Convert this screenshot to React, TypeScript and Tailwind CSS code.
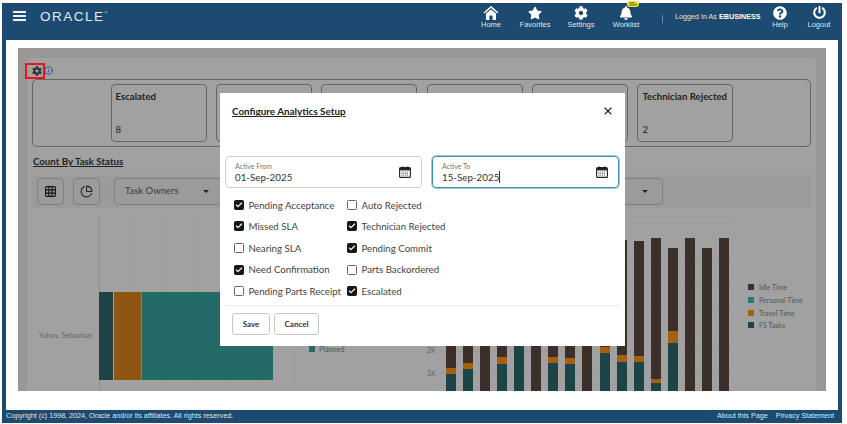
import { FaStar, FaCog, FaBell, FaQuestionCircle, FaPowerOff } from 'react-icons/fa';
import { Check, X, Info, Grid3x3, ChartPie } from 'lucide-react';
import type { ReactNode } from 'react';

const cards = [
  { title: 'Escalated', count: '8' },
  { title: '', count: '' },
  { title: '', count: '' },
  { title: '', count: '' },
  { title: '', count: '' },
  { title: 'Technician Rejected', count: '2' },
];

const checks = [
  { label: 'Pending Acceptance', on: true },
  { label: 'Auto Rejected', on: false },
  { label: 'Missed SLA', on: true },
  { label: 'Technician Rejected', on: true },
  { label: 'Nearing SLA', on: false },
  { label: 'Pending Commit', on: true },
  { label: 'Need Confirmation', on: true },
  { label: 'Parts Backordered', on: false },
  { label: 'Pending Parts Receipt', on: false },
  { label: 'Escalated', on: true },
];

// top of bar, end of dark part, end of orange part; all page y, bottom is 391
const bars = [
  { x: 446, top: 240, dark: 368, orange: 374 },
  { x: 463, top: 240, dark: 363, orange: 369 },
  { x: 480, top: 240, dark: 391, orange: 391 },
  { x: 497, top: 240, dark: 357, orange: 364 },
  { x: 514, top: 340, dark: 340, orange: 340 },
  { x: 531, top: 240, dark: 391, orange: 391 },
  { x: 548, top: 240, dark: 357, orange: 363 },
  { x: 565, top: 240, dark: 358, orange: 364 },
  { x: 582, top: 240, dark: 391, orange: 391 },
  { x: 600, top: 240, dark: 347, orange: 353 },
  { x: 617, top: 240, dark: 355, orange: 362 },
  { x: 634, top: 241, dark: 356, orange: 362 },
  { x: 651, top: 238, dark: 379, orange: 383 },
  { x: 668, top: 248, dark: 331, orange: 343 },
  { x: 685, top: 238, dark: 391, orange: 391 },
  { x: 702, top: 248, dark: 391, orange: 391 },
  { x: 719, top: 238, dark: 391, orange: 391 },
];

const legend = [
  { label: 'Idle Time', color: '#3a2f29', y: 287 },
  { label: 'Personal Time', color: '#2a7a78', y: 300 },
  { label: 'Travel Time', color: '#a5600f', y: 313 },
  { label: 'FS Tasks', color: '#1c4345', y: 325 },
];

function HomeIcon() {
  return (
    <svg width="16" height="14" viewBox="0 0 16 14" fill="none">
      <path d="M1 7 L8 1 L15 7" stroke="#fff" strokeWidth="1.6" />
      <path d="M3 7.6 L8 3.4 L13 7.6 V14 H9.6 V9.6 H6.4 V14 H3 Z" fill="#fff" />
    </svg>
  );
}

function CalendarIcon() {
  return (
    <svg width="12" height="12" viewBox="0 0 12 12" fill="none">
      <rect x="0.6" y="1.6" width="10.8" height="9.8" rx="1" stroke="#222" strokeWidth="1.1" />
      <rect x="1" y="2" width="10" height="2.4" fill="#222" />
      <rect x="2.8" y="0.4" width="1" height="2" fill="#222" />
      <rect x="8.2" y="0.4" width="1" height="2" fill="#222" />
      <path d="M2.5 6h7M2.5 7.6h7M2.5 9.2h7" stroke="#555" strokeWidth="0.9" strokeDasharray="1 0.8" />
    </svg>
  );
}

function NavItem({ icon, label, width }: { icon: ReactNode; label: string; width: string }) {
  return (
    <div className={`flex flex-col items-center ${width}`}>
      <div className="flex h-[15px] items-center justify-center">{icon}</div>
      <span className="whitespace-nowrap text-[7.5px] leading-[10px] text-[#dfe6ec]">{label}</span>
    </div>
  );
}

function DateField({ label, value, active, width }: { label: string; value: string; active?: boolean; width: string }) {
  return (
    <div
      className={`flex h-[32px] items-center justify-between rounded-[4px] border pl-[9px] pr-[10px] ${width} ${
        active ? 'border-[#3f8fb5] shadow-[0_0_0_0.5px_#3f8fb5]' : 'border-[#d0d0d0]'
      }`}
    >
      <div className="flex flex-col">
        <span className="text-[7px] leading-[9px] text-[#777]">{label}</span>
        <span className="text-[9.8px] leading-[12px] text-[#333]">
          {value}
          {active && <span className="border-r border-[#333]" />}
        </span>
      </div>
      <CalendarIcon />
    </div>
  );
}

function Dropdown({ label, width }: { label: string; width: string }) {
  return (
    <div className={`flex h-[27px] items-center justify-between rounded-[4px] border border-[#7f7f7f] pl-[10px] pr-[14px] ${width}`}>
      <span className="text-[9.5px] text-[#3d3d3d]">{label}</span>
      <span className="h-0 w-0 border-x-[3px] border-t-[3px] border-x-transparent border-t-[#222]" />
    </div>
  );
}

function ConfigureModal() {
  return (
    <div className="absolute left-[202px] top-[45px] flex h-[253px] w-[405px] flex-col bg-white px-[5px]">
      <div className="flex items-center justify-between pl-[7px] pr-[6px] pt-[11px]">
        <span className="text-[9.9px] font-bold leading-[14px] text-[#222] underline">Configure Analytics Setup</span>
        <X size={12} strokeWidth={2.2} className="text-[#222]" />
      </div>
      <div className="mt-[38px] flex gap-[10px]">
        <DateField label="Active From" value="01-Sep-2025" width="w-[197px]" />
        <DateField label="Active To" value="15-Sep-2025" active width="w-[187px]" />
      </div>
      <div className="mt-[6px] grid grid-cols-[113px_1fr] pl-[9px]">
        {checks.map((c) => (
          <div key={c.label} className="flex h-[21.6px] items-center gap-[4.5px]">
            <span
              className={`flex h-[10px] w-[10px] shrink-0 items-center justify-center rounded-[1.5px] border ${
                c.on ? 'border-[#161616] bg-[#161616]' : 'border-[#666] bg-white'
              }`}
            >
              {c.on && <Check size={8} strokeWidth={3.5} className="text-white" />}
            </span>
            <span className="whitespace-nowrap text-[9.7px] text-[#444]">{c.label}</span>
          </div>
        ))}
      </div>
      <div className="mt-[3px] flex gap-[4px] border-t border-[#ececec] pl-[7px] pt-[7px]">
        <button className="h-[22px] w-[38px] rounded-[3px] border border-[#c8c8c8] text-[8px] font-bold text-[#333]">Save</button>
        <button className="h-[22px] w-[45px] rounded-[3px] border border-[#c8c8c8] text-[8px] font-bold text-[#333]">Cancel</button>
      </div>
    </div>
  );
}

function LeftChart() {
  return (
    <svg width="388" height="183" viewBox="32 208 388 183" className="shrink-0">
      {[131.5, 163.5, 195.5, 228, 260].map((x) => (
        <line key={x} x1={x} y1="216" x2={x} y2="391" stroke="#999" strokeWidth="0.6" />
      ))}
      <line x1="99.5" y1="216" x2="99.5" y2="391" stroke="#8a8a8a" strokeWidth="0.8" />
      <rect x="99" y="292" width="14" height="88" fill="#1f4345" />
      <rect x="114" y="292" width="27.5" height="88" fill="#8e5612" />
      <rect x="142" y="292" width="131" height="88" fill="#246a66" />
      <text x="92" y="338" textAnchor="end" fontSize="7.2" fill="#666">Yuhov, Sebastian</text>
      <line x1="293" y1="340" x2="293" y2="391" stroke="#999" strokeWidth="0.6" />
      <rect x="309" y="346" width="6" height="6" fill="#246a66" />
      <text x="319" y="352" fontSize="7.2" fill="#555">Planned</text>
    </svg>
  );
}

function RightChart() {
  return (
    <svg width="391" height="183" viewBox="420 208 391 183" className="shrink-0">
      {[217, 262, 284, 306, 328, 351, 373].map((y) => (
        <line key={y} x1="440" y1={y} x2="732" y2={y} stroke="#999" strokeWidth="0.6" />
      ))}
      <text x="436" y="353" textAnchor="end" fontSize="7.5" fill="#666">2K</text>
      <text x="436" y="376" textAnchor="end" fontSize="7.5" fill="#666">1K</text>
      {bars.map((b) => (
        <g key={b.x}>
          <rect x={b.x} y={b.top} width="10" height={b.dark - b.top} fill="#3a2f29" />
          <rect x={b.x} y={b.dark} width="10" height={b.orange - b.dark} fill="#a5600f" />
          <rect x={b.x} y={b.orange} width="10" height={391 - b.orange} fill="#1c4345" />
        </g>
      ))}
      {legend.map((l) => (
        <g key={l.label}>
          <rect x="748" y={l.y - 3} width="6" height="6" fill={l.color} />
          <text x="759" y={l.y + 2.5} fontSize="7.1" fill="#555">{l.label}</text>
        </g>
      ))}
    </svg>
  );
}

export default function App() {
  return (
    <div className="h-[424px] w-[847px] overflow-hidden bg-white pb-px pl-[2px] pr-[5px] pt-[3px] font-['Lato',sans-serif]">
      <div className="flex h-[420px] flex-col bg-[#1c4a70] font-['Liberation_Sans',sans-serif]">
        {/* top bar */}
        <div className="flex h-[37px] items-start pl-[11px]">
          <div className="mt-[8px] flex w-[13px] flex-col gap-[2px]">
            <span className="h-[2px] bg-[#eef2f5]" />
            <span className="h-[2px] bg-[#eef2f5]" />
            <span className="h-[2px] bg-[#eef2f5]" />
          </div>
          <span className="ml-[14px] mt-[7px] text-[13.5px] leading-[13px] tracking-[1.5px] text-[#e4eaef]">ORACLE</span>
          <span className="mt-[8px] text-[4px] leading-[4px] text-[#dbe3e9]">®</span>
          <div className="ml-auto flex items-start pt-[2px]">
            <NavItem icon={<HomeIcon />} label="Home" width="w-[40px]" />
            <NavItem icon={<FaStar size={14} color="#fff" />} label="Favorites" width="w-[48px]" />
            <NavItem icon={<FaCog size={14} color="#fff" />} label="Settings" width="w-[44px]" />
            <div className="relative">
              <NavItem icon={<FaBell size={14} color="#fff" />} label="Worklist" width="w-[46px]" />
              <span className="absolute left-[24px] top-[-4px] rounded-[4px] bg-[#f2e32c] px-[2px] text-[5px] leading-[6px] text-[#333]">99+</span>
            </div>
            <span className="ml-[13px] mt-[10px] h-[8px] w-px bg-[#6f8ea8]" />
            <span className="ml-[12px] mt-[7px] w-[91px] whitespace-nowrap text-[7.2px] leading-[10px] text-[#dfe6ec]">
              Logged In As <b className="text-white">EBUSINESS</b>
            </span>
            <NavItem icon={<FaQuestionCircle size={14} color="#fff" />} label="Help" width="w-[28px]" />
            <div className="ml-[2px]">
              <NavItem icon={<FaPowerOff size={13} color="#fff" />} label="Logout" width="w-[46px]" />
            </div>
          </div>
        </div>

        {/* white page */}
        <div className="mx-[4px] h-[370px] bg-white pl-[12px] pr-[12px] pt-[8px] font-['Lato',sans-serif]">
          <div className="relative h-[343px] w-[808px] overflow-hidden bg-[#9a9896] pl-[9px] pr-[10px] pt-[10px]">
            <div className="h-[333px] rounded-t-[4px] bg-[#a1a1a1] px-[5px] pt-[4px]">
              <div className="-ml-[7px] flex h-[17px] items-center">
                <div className="flex h-[16px] w-[20px] items-center justify-center border-2 border-[#e8141f] pl-[4px]">
                  <FaCog size={10} color="#333" />
                </div>
                <Info size={9} strokeWidth={2.4} className="-ml-[1px] text-[#1c5f88]" />
              </div>

              <div className="flex h-[68px] w-[779px] gap-[9.4px] rounded-[5px] border border-[#666] py-[4px] pl-[77.5px]">
                {cards.map((card, i) => (
                  <div key={i} className="flex w-[96px] flex-col justify-between rounded-[4px] border border-[#666] px-[4px] pb-[4px] pt-[5px]">
                    <span className="whitespace-nowrap text-[9.6px] font-bold leading-[14px] text-[#222]">{card.title}</span>
                    <span className="text-[9.6px] leading-[14px] text-[#222]">{card.count}</span>
                  </div>
                ))}
              </div>

              <div className="mt-[7px] pl-px text-[9.7px] font-bold leading-[14px] text-[#222] underline">Count By Task Status</div>

              <div className="mt-[7px] flex h-[33px] w-[779px] items-center gap-[9px] bg-[#9b9b9b] pl-[5px]">
                <div className="flex h-[27px] w-[27px] items-center justify-center rounded-[4px] border border-[#7f7f7f]">
                  <Grid3x3 size={13} strokeWidth={2} className="text-[#111]" />
                </div>
                <div className="flex h-[27px] w-[27px] items-center justify-center rounded-[4px] border border-[#7f7f7f]">
                  <ChartPie size={13} strokeWidth={2} className="text-[#222]" />
                </div>
                <span className="h-[24px] w-px bg-[#939393]" />
                <div className="-ml-[5px] flex gap-[10px]">
                  <Dropdown label="Task Owners" width="w-[110px]" />
                  <Dropdown label="" width="w-[429px]" />
                </div>
              </div>

              <div className="flex h-[183px] w-[779px] overflow-hidden">
                <LeftChart />
                <RightChart />
              </div>
            </div>
            <ConfigureModal />
          </div>
        </div>

        {/* footer */}
        <div className="flex h-[13px] items-center justify-between pl-[4px] pr-[8px] text-[7.2px] text-[#dfe6ec]">
          <span>Copyright (c) 1998, 2024, Oracle and/or its affiliates. All rights reserved.</span>
          <div className="flex gap-[8px]">
            <span>About this Page</span>
            <span>Privacy Statement</span>
          </div>
        </div>
      </div>
    </div>
  );
}
